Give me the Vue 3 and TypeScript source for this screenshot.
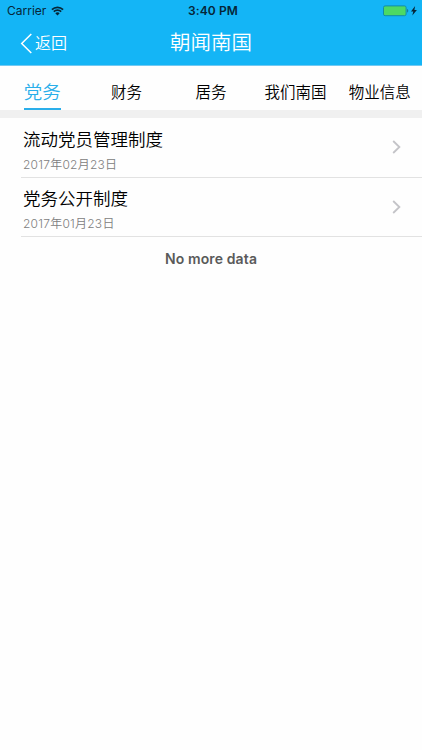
<script setup lang="ts">
import { ref } from 'vue'

interface Article {
  title: string
  date: string
}

const tabs: string[] = ['党务', '财务', '居务', '我们南国', '物业信息']
const active = ref(0)
const articles: Article[] = [
  { title: '流动党员管理制度', date: '2017年02月23日' },
  { title: '党务公开制度', date: '2017年01月23日' },
]
</script>

<template>
  <div class="screen">
    <header class="header">
      <div class="status">
        <div class="carrier">
          <span>Carrier</span>
          <svg class="wifi" width="13" height="10" viewBox="0 0 13 10">
            <path d="M0.9 3.6a8 8 0 0 1 11.2 0" />
            <path d="M2.8 5.6a5.3 5.3 0 0 1 7.4 0" />
            <path class="dot" d="M6.5 9.5 4.3 7.2a3.2 3.2 0 0 1 4.4 0z" />
          </svg>
        </div>
        <span class="time">3:40 PM</span>
        <div class="power">
          <svg width="35" height="12" viewBox="0 0 35 12">
            <rect class="battery" x="0.5" y="0.9" width="22.6" height="9.8" rx="1.6" />
            <path class="ink cap" d="M24 4.1c1.7.3 1.7 3.1 0 3.4z" />
            <path class="ink" d="M32.1 1.1 28 6.6h2.3l-1 4 4.6-5.5h-2.5z" />
          </svg>
        </div>
      </div>
      <nav class="nav">
        <button class="back" type="button">
          <svg width="12" height="21" viewBox="0 0 12 21">
            <path d="M11.3 1 1.7 10.5 11.3 20" />
          </svg>
          <span>返回</span>
        </button>
        <h1 class="title">朝闻南国</h1>
      </nav>
    </header>

    <div class="tabs">
      <button
        v-for="(tab, i) in tabs"
        :key="tab"
        type="button"
        class="tab"
        :class="{ active: i === active }"
        @click="active = i"
      >
        <span class="label">{{ tab }}</span>
      </button>
    </div>

    <ul class="list">
      <li v-for="item in articles" :key="item.title" class="row">
        <div class="text">
          <div class="name">{{ item.title }}</div>
          <div class="date">{{ item.date }}</div>
        </div>
        <svg class="chevron" width="9" height="14" viewBox="0 0 9 14">
          <path d="M1.2 1 7.4 7 1.2 13" />
        </svg>
      </li>
    </ul>
    <p class="end">No more data</p>
  </div>
</template>

<style>
body {
  background: #fefefe;
}
</style>

<style scoped>
.screen {
  height: 750px;
  overflow: hidden;
  background: #fefefe;
  font-family: Inter, "Noto Sans CJK SC", sans-serif;
  font-weight: 350;
  color: #000;
}
button {
  border: 0;
  padding: 0;
  background: none;
  font: inherit;
  color: inherit;
}
.header {
  box-sizing: border-box;
  height: 66px;
  background: #14b5f6;
  border-bottom: 1px solid #72c9f2;
}
.status {
  display: grid;
  grid-template-columns: 1fr auto 1fr;
  align-items: center;
  height: 22px;
  padding: 0 4px 0 7px;
  font-size: 12px;
  font-weight: 400;
  line-height: 22px;
  color: #062638;
}
.carrier {
  display: flex;
  align-items: center;
  gap: 5px;
}
.wifi {
  fill: none;
  stroke: #062638;
  stroke-width: 1.7;
  margin-bottom: 1px;
}
.wifi .dot {
  fill: #062638;
  stroke: none;
}
.time {
  font-weight: 600;
  letter-spacing: 0.1px;
  padding-left: 1px;
}
.power {
  display: flex;
  justify-content: flex-end;
}
.battery {
  fill: #4cd964;
  stroke: #138da4;
}
.ink {
  fill: #062638;
}
.cap {
  fill: #147c9f;
}
.nav {
  display: grid;
  grid-template-columns: 1fr auto 1fr;
  align-items: center;
  height: 43px;
  padding: 0 20px;
  color: #fff;
}
.back {
  display: flex;
  align-items: center;
  gap: 3px;
  font-size: 16px;
  line-height: 24px;
  padding-bottom: 1px;
}
.back svg {
  fill: none;
  stroke: #fff;
  stroke-width: 1.5;
}
.title {
  margin: 0;
  font-size: 20.5px;
  font-weight: inherit;
  line-height: 30px;
  padding-bottom: 2px;
}
.tabs {
  display: grid;
  grid-template-columns: repeat(5, 1fr);
  height: 44px;
  border-bottom: 8px solid #f0f0f0;
}
.tab {
  display: flex;
  justify-content: center;
  font-size: 15.5px;
}
.label {
  box-sizing: border-box;
  height: 44px;
  line-height: 54px;
  white-space: nowrap;
}
.active {
  font-size: 18.5px;
  color: #2aaeea;
}
.active .label {
  line-height: 52px;
  border-bottom: 2px solid #2aaeea;
}
.list {
  margin: 0;
  padding: 0 0 0 21px;
  list-style: none;
}
.row {
  box-sizing: border-box;
  display: flex;
  justify-content: space-between;
  align-items: center;
  height: 59px;
  padding: 0 20px 0 2px;
  border-bottom: 1px solid #e2e2e2;
}
.row:first-child {
  height: 60px;
}
.text {
  padding-top: 8px;
}
.name {
  font-size: 17.5px;
  line-height: 26px;
}
.date {
  font-size: 12px;
  letter-spacing: 0.24px;
  line-height: 24px;
  color: #808080;
}
.chevron {
  fill: none;
  stroke: #c4c4c8;
  stroke-width: 1.8;
  margin: 0 1px 1px 0;
}
.end {
  margin: 0;
  padding-top: 12px;
  text-align: center;
  font-size: 14px;
  font-weight: 600;
  letter-spacing: 0.12px;
  line-height: 20px;
  color: #5a5a5a;
}
</style>
